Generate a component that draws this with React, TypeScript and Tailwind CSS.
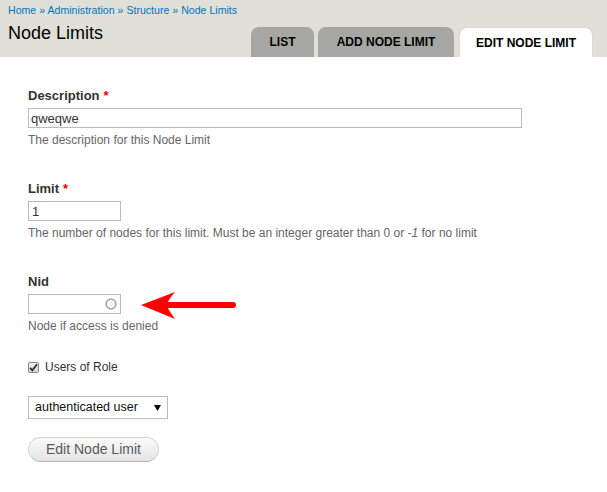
import React from "react"

const font = { fontFamily: '"Liberation Sans", Arial, sans-serif' }

function Label({ text, required }: { text: string; required?: boolean }) {
  return (
    <div className="text-[13px] leading-[16px] font-bold text-[#333]">
      {text}
      {required && <span className="text-[#e00] ml-[4px]">*</span>}
    </div>
  )
}

function Help({ children }: { children: React.ReactNode }) {
  return <div className="mt-[5px] text-[12px] leading-[15px] text-[#666]">{children}</div>
}

function Arrow() {
  return (
    <svg width="96" height="30" viewBox="0 0 96 30" className="absolute left-[113px] top-[-3px]">
      <path d="M0 14 L34 1 Q28 8 27 11 L92 11 A3 3 0 0 1 92 17 L27 17 Q28 20 34 28 Z" fill="#f00" />
    </svg>
  )
}

export default function App() {
  return (
    <div className="min-h-screen bg-white" style={font}>
      {/* Header */}
      <header className="bg-[#e0e0d8] h-[57px] px-2 flex flex-col">
        <div className="pt-[3px] h-[17px] text-[10.6px] leading-[14px] text-[#0074bd]">
          <a href="#">Home</a> » <a href="#">Administration</a> » <a href="#">Structure</a> »{" "}
          <a href="#">Node Limits</a>
        </div>
        <div className="flex-1 flex justify-between">
          <h1 className="mt-[5px] text-[18px] leading-[22px] font-normal text-black">Node Limits</h1>
          <div className="self-end flex items-end mr-[6px] text-[12px] font-bold uppercase text-black">
            <div className="w-[63px] h-[30px] rounded-t-[8px] bg-[#a6a7a2] flex items-center justify-center">List</div>
            <div className="ml-[4px] w-[136px] h-[30px] rounded-t-[8px] bg-[#a6a7a2] flex items-center justify-center">
              Add node limit
            </div>
            <div className="ml-[5px] w-[134px] h-[30px] rounded-t-[8px] bg-white border border-b-0 border-[#dcdcd4] flex items-center justify-center">
              Edit node limit
            </div>
          </div>
        </div>
      </header>

      {/* Form */}
      <div className="px-[28px] pt-[31px] pb-6">
        <Label text="Description" required />
        <input
          defaultValue="qweqwe"
          className="mt-[4px] block w-[494px] h-[20px] border border-[#bbb] px-[2px] text-[13px] text-[#333] outline-none"
        />
        <Help>The description for this Node Limit</Help>

        <div className="mt-[33px]">
          <Label text="Limit" required />
          <input
            defaultValue="1"
            className="mt-[4px] block w-[93px] h-[20px] border border-[#bbb] px-[3px] text-[13px] text-[#333] outline-none"
          />
          <Help>
            The number of nodes for this limit. Must be an integer greater than 0 or <em>-1</em> for no limit
          </Help>
        </div>

        <div className="mt-[33px]">
          <Label text="Nid" />
          <div className="relative mt-[4px]">
            <div className="w-[93px] h-[20px] border border-[#bbb] flex items-center justify-end pr-[3px]">
              <svg width="12" height="12" viewBox="0 0 12 12">
                <circle cx="6" cy="6" r="4.8" fill="none" stroke="#a8a8a8" strokeWidth="1.8" />
              </svg>
            </div>
            <Arrow />
          </div>
          <Help>Node if access is denied</Help>
        </div>

        <label className="mt-[26px] flex items-center gap-[6px] text-[12px] leading-[15px] text-[#333]">
          <span className="w-[11px] h-[11px] rounded-[2px] border border-[#8c8c8c] bg-gradient-to-b from-[#f2f2f2] to-[#d6d6d6] flex items-center justify-center">
            <svg width="9" height="9" viewBox="0 0 9 9">
              <path d="M1 4.8 L3.4 7.4 L8 1.2" fill="none" stroke="#333" strokeWidth="1.8" />
            </svg>
          </span>
          Users of Role
        </label>

        <div className="mt-[21px] w-[140px] h-[23px] border border-[#bbb] bg-white flex items-center justify-between pl-[6px] pr-[6px] text-[12.5px] text-[#111]">
          <span>authenticated user</span>
          <svg width="7" height="6" viewBox="0 0 7 6">
            <path d="M0 0 H7 L3.5 6 Z" fill="#000" />
          </svg>
        </div>

        <button className="mt-[18px] h-[25px] px-[17px] rounded-full border border-[#d2d2d2] border-b-[#b4b4b4] bg-gradient-to-b from-[#fafafa] to-[#e4e4e4] text-[14px] text-[#5a5a5a]">
          Edit Node Limit
        </button>
      </div>
    </div>
  )
}
